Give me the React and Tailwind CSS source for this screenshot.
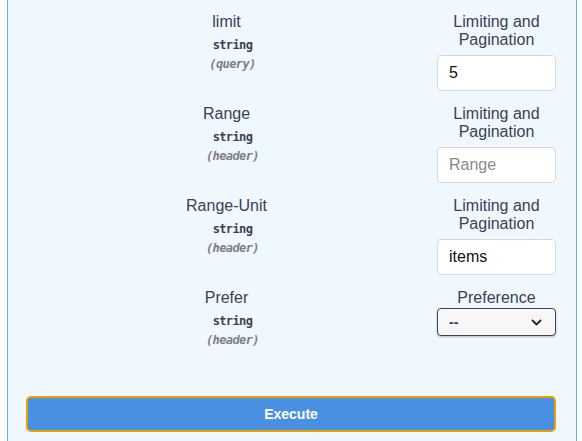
const PARAMS = [
  { name: "limit", type: "string", where: "(query)", label: ["Limiting and", "Pagination"], value: "5" },
  { name: "Range", type: "string", where: "(header)", label: ["Limiting and", "Pagination"], placeholder: "Range" },
  { name: "Range-Unit", type: "string", where: "(header)", label: ["Limiting and", "Pagination"], value: "items" },
  { name: "Prefer", type: "string", where: "(header)", label: ["Preference"], select: true },
];

function ParamRow({ p }) {
  return (
    <div className="flex pt-[13px] pb-[1px]">
      <div className="flex w-[421px] flex-col items-center">
        <div className="text-[16px] leading-[18px] text-[#3b4151]">{p.name}</div>
        <div className="mt-[5px] pl-[12px] font-['DejaVu_Sans_Mono',monospace] text-[12px] font-bold leading-[18px] tracking-[-0.6px] text-[#3b4151]">
          {p.type}
        </div>
        <div className="mt-[1px] pl-[12px] font-['DejaVu_Sans_Mono',monospace] text-[12px] font-semibold italic leading-[18px] tracking-[-0.6px] text-[#808080]">
          {p.where}
        </div>
      </div>
      <div className="flex w-[119px] flex-col items-center">
        <div className="text-center text-[16px] leading-[18px] text-[#3b4151]">
          {p.label.map((l) => (
            <div key={l}>{l}</div>
          ))}
        </div>
        {p.select ? (
          <div className="mt-[1px] flex h-[28px] w-[119px] items-center justify-between rounded-[4px] border border-[#41444e] bg-[#f7f7f7] pl-[11px] pr-[13px] shadow-[0_1px_2px_rgba(0,0,0,0.25)]">
            <span className="text-[14px] font-bold text-[#3b4151]">--</span>
            <svg width="11" height="7" viewBox="0 0 11 7" fill="none">
              <path d="M1 1l4.5 4.5L10 1" stroke="#222" strokeWidth="1.8" />
            </svg>
          </div>
        ) : (
          <div className="mt-[6px] flex h-[36px] w-[119px] items-center rounded-[4px] border border-[#d9d9d9] bg-white pl-[11px] text-[16px]">
            {p.value ? (
              <span className="text-[#111]">{p.value}</span>
            ) : (
              <span className="text-[#8a8a8a]">{p.placeholder}</span>
            )}
          </div>
        )}
      </div>
    </div>
  );
}

export default function App() {
  return (
    <div className="h-[441px] w-[582px] overflow-hidden bg-white font-['Liberation_Sans',Arial,sans-serif]">
      <div className="ml-[7px] h-full w-[570px] border-x border-[#61affe] bg-[#eff7ff] pl-[8px]">
        {PARAMS.map((p) => (
          <ParamRow key={p.name} p={p} />
        ))}
        <div className="pt-[46px] pl-[10px]">
          <button className="flex h-[36px] w-[530px] items-center justify-center rounded-[5px] border-2 border-[#e8a100] bg-[#4990e2] text-[14px] font-bold text-white">
            Execute
          </button>
        </div>
      </div>
    </div>
  );
}
